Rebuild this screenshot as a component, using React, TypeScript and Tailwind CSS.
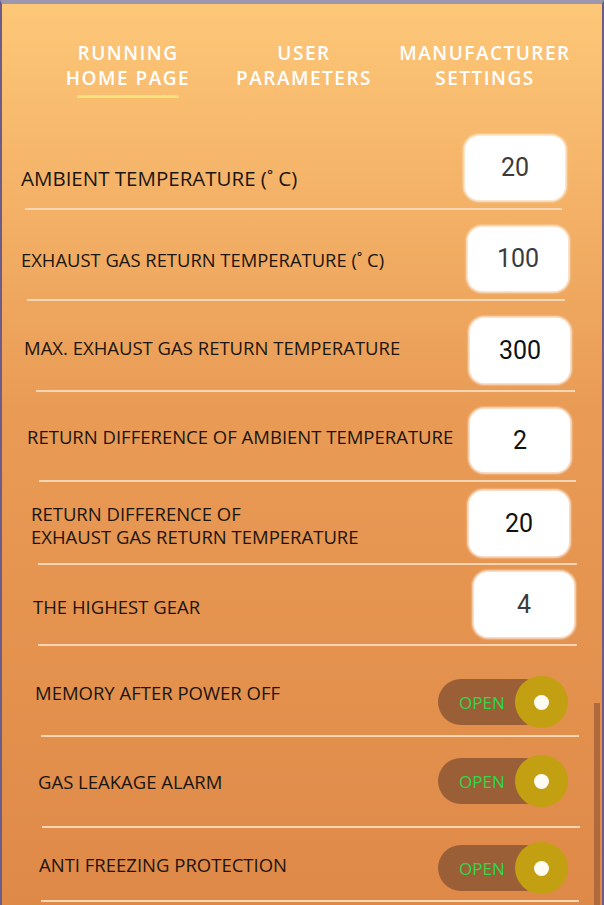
import React from 'react';

type Row = {
  label: string[];
  size: string;
  pl: string;
  pr: string;
  h: string;
  labelMt: string;
  ctrlMt: string;
  lineMl: string;
  lineMr: string;
  value?: string;
  valueColor?: string;
  boxH?: string;
  toggle?: boolean;
};

const rows: Row[] = [
  { label: ['AMBIENT TEMPERATURE (˚ C)'], size: 'text-[20.5px]', pl: 'pl-[19px]', pr: 'pr-[37px]', h: 'h-[80px]', labelMt: 'mt-[38px]', ctrlMt: 'mt-[8px]', lineMl: 'ml-[23px]', lineMr: 'mr-[40px]', value: '20', valueColor: 'text-[#3b3b3b]', boxH: 'h-[64px]' },
  { label: ['EXHAUST GAS RETURN TEMPERATURE (˚ C)'], size: 'text-[18.4px]', pl: 'pl-[19px]', pr: 'pr-[34px]', h: 'h-[89px]', labelMt: 'mt-[38px]', ctrlMt: 'mt-[17px]', lineMl: 'ml-[25px]', lineMr: 'mr-[37px]', value: '100', valueColor: 'text-[#3b3b3b]', boxH: 'h-[64px]' },
  { label: ['MAX. EXHAUST GAS RETURN TEMPERATURE'], size: 'text-[18.5px]', pl: 'pl-[22px]', pr: 'pr-[32px]', h: 'h-[89px]', labelMt: 'mt-[35px]', ctrlMt: 'mt-[17px]', lineMl: 'ml-[34px]', lineMr: 'mr-[27px]', value: '300', valueColor: 'text-[#111]', boxH: 'h-[65px]' },
  { label: ['RETURN DIFFERENCE OF AMBIENT TEMPERATURE'], size: 'text-[18.5px]', pl: 'pl-[25px]', pr: 'pr-[32px]', h: 'h-[88px]', labelMt: 'mt-[33px]', ctrlMt: 'mt-[17px]', lineMl: 'ml-[37px]', lineMr: 'mr-[26px]', value: '2', valueColor: 'text-[#111]', boxH: 'h-[63px]' },
  { label: ['RETURN DIFFERENCE OF', 'EXHAUST GAS RETURN TEMPERATURE'], size: 'text-[18.5px]', pl: 'pl-[29px]', pr: 'pr-[33px]', h: 'h-[81px]', labelMt: 'mt-[20px]', ctrlMt: 'mt-[9px]', lineMl: 'ml-[36px]', lineMr: 'mr-[25px]', value: '20', valueColor: 'text-[#111]', boxH: 'h-[65px]' },
  { label: ['THE HIGHEST GEAR'], size: 'text-[18.5px]', pl: 'pl-[31px]', pr: 'pr-[28px]', h: 'h-[79px]', labelMt: 'mt-[30px]', ctrlMt: 'mt-[7px]', lineMl: 'ml-[36px]', lineMr: 'mr-[25px]', value: '4', valueColor: 'text-[#3b3b3b]', boxH: 'h-[65px]' },
  { label: ['MEMORY AFTER POWER OFF'], size: 'text-[18.5px]', pl: 'pl-[33px]', pr: 'pr-[34px]', h: 'h-[89px]', labelMt: 'mt-[35px]', ctrlMt: 'mt-[30px]', lineMl: 'ml-[39px]', lineMr: 'mr-[23px]', toggle: true },
  { label: ['GAS LEAKAGE ALARM'], size: 'text-[18.5px]', pl: 'pl-[36px]', pr: 'pr-[34px]', h: 'h-[89px]', labelMt: 'mt-[33px]', ctrlMt: 'mt-[18px]', lineMl: 'ml-[40px]', lineMr: 'mr-[22px]', toggle: true },
  { label: ['ANTI FREEZING PROTECTION'], size: 'text-[18.5px]', pl: 'pl-[37px]', pr: 'pr-[34px]', h: 'h-[72px]', labelMt: 'mt-[25px]', ctrlMt: 'mt-[14px]', lineMl: 'ml-[39px]', lineMr: 'mr-[23px]', toggle: true },
];

const Toggle = () => (
  <div className="relative w-[130px] h-[52px]">
    <div className="absolute left-0 right-[20px] top-[3px] bottom-[3px] rounded-full bg-[#9a5f37] flex items-center pl-[21px]">
      <span className="text-[17px] leading-none text-[#2fd749] font-['Open_Sans',sans-serif]">OPEN</span>
    </div>
    <div className="absolute right-0 top-0 w-[53px] h-[52px] rounded-full bg-[#c3a012] flex items-center justify-center">
      <div className="w-[15px] h-[15px] rounded-full bg-[#fdfbf2]" />
    </div>
  </div>
);

const Tab = ({ lines, width, active }: { lines: string[]; width: string; active?: boolean }) => (
  <div className={`${width} flex flex-col items-center`}>
    {lines.map((l) => (
      <div key={l} className="text-[19px] leading-[25px] tracking-[1.5px] font-semibold text-white text-center">
        {l}
      </div>
    ))}
    {active && <div className="mt-[4px] h-[3px] w-[102px] bg-[#f4e07c] rounded-full" />}
  </div>
);

export default function App() {
  return (
    <div className="relative w-[604px] h-[905px] overflow-hidden border-t-[4px] border-t-[#9c97ad] border-l-[2px] border-r-[2px] border-l-[#6b5c8a] border-r-[#6b5c8a] bg-linear-to-b from-[#fdc778] via-[#e99b55] via-45% to-[#df8948] font-['Open_Sans',sans-serif]">
      <div className="h-[124px] pt-[37px] pl-[36px] flex items-start">
        <Tab width="w-[180px]" lines={['RUNNING', 'HOME PAGE']} active />
        <Tab width="w-[172px]" lines={['USER', 'PARAMETERS']} />
        <Tab width="w-[190px]" lines={['MANUFACTURER', 'SETTINGS']} />
      </div>

      <div className="flex flex-col">
        {rows.map((r, i) => (
          <div key={i} className="flex flex-col">
            <div className={`flex justify-between items-start ${r.h} ${r.pl} ${r.pr}`}>
              <div className={`${r.labelMt} ${r.size} ${r.label.length > 1 ? 'leading-[23px]' : 'leading-[24px]'} text-[#1b1510]`}>
                {r.label.map((l) => (
                  <div key={l}>{l}</div>
                ))}
              </div>
              <div className={r.ctrlMt}>
                {r.toggle ? (
                  <Toggle />
                ) : (
                  <div className={`w-[100px] ${r.boxH} rounded-[14px] bg-white shadow-[0_0_2px_2px_rgba(255,250,245,0.75)] flex items-center justify-center`}>
                    <span className={`text-[25px] font-['Roboto',sans-serif] ${r.valueColor}`}>{r.value}</span>
                  </div>
                )}
              </div>
            </div>
            <div className={`h-[2px] bg-[#f7d6b5] ${r.lineMl} ${r.lineMr}`} />
          </div>
        ))}
      </div>

      <div className="absolute right-[2px] top-[699px] bottom-0 w-[6px] bg-[#b0693d]" />
    </div>
  );
}
